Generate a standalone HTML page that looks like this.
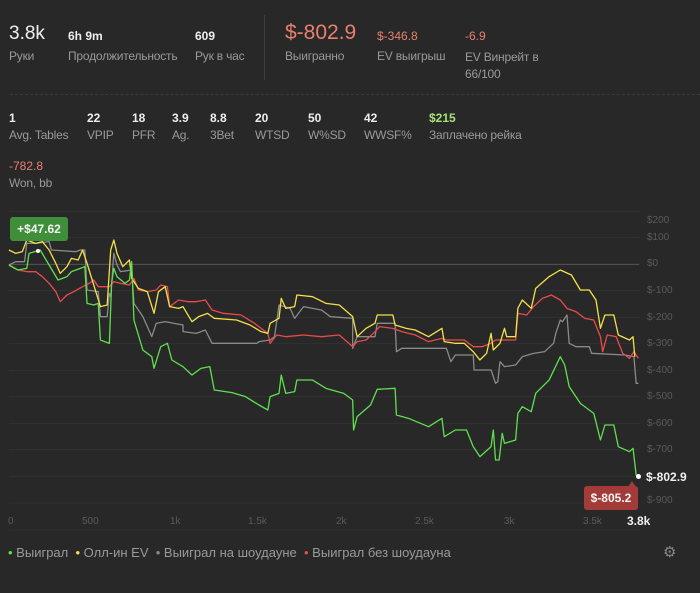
<!DOCTYPE html>
<html><head><meta charset="utf-8"><style>
body{margin:0;width:700px;height:593px;background:#282828;font-family:"Liberation Sans",sans-serif;overflow:hidden;position:relative;color:#e8e8e8}
.a{position:absolute;white-space:nowrap}
.v{font-size:12px;font-weight:bold;color:#eee}
.l{font-size:12px;color:#9a9a9a;letter-spacing:-0.2px}
.r{color:#e8806e}
.ax{position:absolute;font-size:10px;color:#5a5a5a;white-space:nowrap}
</style></head><body>
<div class="a" style="left:9px;top:23px;font-size:19px;color:#f0f0f0">3.8k</div>
<div class="a l" style="left:9px;top:49px">Руки</div>
<div class="a v" style="left:68px;top:29px">6h 9m</div>
<div class="a l" style="left:68px;top:49px">Продолжительность</div>
<div class="a v" style="left:195px;top:29px">609</div>
<div class="a l" style="left:195px;top:49px">Рук в час</div>
<div class="a" style="left:264px;top:15px;width:1px;height:65px;background:#3c3c3c"></div>
<div class="a r" style="left:285px;top:21px;font-size:21px">$-802.9</div>
<div class="a l" style="left:285px;top:49px">Выигранно</div>
<div class="a r" style="left:377px;top:29px;font-size:12px">$-346.8</div>
<div class="a l" style="left:377px;top:49px">EV выигрыш</div>
<div class="a r" style="left:465px;top:29px;font-size:12px">-6.9</div>
<div class="a l" style="left:465px;top:49px;line-height:17px">EV Винрейт в<br>66/100</div>
<div class="a" style="left:10px;top:94px;width:690px;border-top:1px dashed #3a3a3a"></div>
<div class="a v" style="left:9px;top:111px">1</div><div class="a l" style="left:9px;top:128px">Avg. Tables</div>
<div class="a v" style="left:87px;top:111px">22</div><div class="a l" style="left:87px;top:128px">VPIP</div>
<div class="a v" style="left:132px;top:111px">18</div><div class="a l" style="left:132px;top:128px">PFR</div>
<div class="a v" style="left:172px;top:111px">3.9</div><div class="a l" style="left:172px;top:128px">Ag.</div>
<div class="a v" style="left:210px;top:111px">8.8</div><div class="a l" style="left:210px;top:128px">3Bet</div>
<div class="a v" style="left:255px;top:111px">20</div><div class="a l" style="left:255px;top:128px">WTSD</div>
<div class="a v" style="left:308px;top:111px">50</div><div class="a l" style="left:308px;top:128px">W%SD</div>
<div class="a v" style="left:364px;top:111px">42</div><div class="a l" style="left:364px;top:128px">WWSF%</div>
<div class="a v" style="left:429px;top:111px;color:#a6e07a">$215</div><div class="a l" style="left:429px;top:128px">Заплачено рейка</div>
<div class="a r" style="left:9px;top:159px;font-size:12px">-782.8</div>
<div class="a l" style="left:9px;top:176px">Won, bb</div>

<svg class="a" style="left:0;top:200px" width="700" height="393" viewBox="0 0 1568 1179" preserveAspectRatio="none">
<g stroke="#313131" stroke-width="1" fill="none">
<line x1="20" x2="1432" y1="34" y2="34" vector-effect="non-scaling-stroke"/>
<line x1="20" x2="1432" y1="113" y2="113" vector-effect="non-scaling-stroke"/>
<line x1="20" x2="1432" y1="272" y2="272" vector-effect="non-scaling-stroke"/>
<line x1="20" x2="1432" y1="352" y2="352" vector-effect="non-scaling-stroke"/>
<line x1="20" x2="1432" y1="431" y2="431" vector-effect="non-scaling-stroke"/>
<line x1="20" x2="1432" y1="511" y2="511" vector-effect="non-scaling-stroke"/>
<line x1="20" x2="1432" y1="590" y2="590" vector-effect="non-scaling-stroke"/>
<line x1="20" x2="1432" y1="670" y2="670" vector-effect="non-scaling-stroke"/>
<line x1="20" x2="1432" y1="749" y2="749" vector-effect="non-scaling-stroke"/>
<line x1="20" x2="1432" y1="829" y2="829" vector-effect="non-scaling-stroke"/>
<line x1="20" x2="1432" y1="909" y2="909" vector-effect="non-scaling-stroke"/>
<line x1="20" x2="1432" y1="990" y2="990" vector-effect="non-scaling-stroke"/>
<line x1="20" x2="1432" y1="193" y2="193" stroke="#555" vector-effect="non-scaling-stroke"/>
</g>
<g fill="none" stroke-width="1.3" stroke-linejoin="round">
<polyline vector-effect="non-scaling-stroke" stroke="#8a8a8a" points="20,195 35,185 55,185 60,130 80,130 110,125 115,150 170,155 180,150 190,150 195,270 220,275 225,350 240,350 245,280 248,290 255,160 262,195 270,215 295,210 300,310 320,350 340,410 350,370 370,365 390,370 410,375 410,395 440,400 460,390 475,430 575,430 580,425 605,420 615,410 625,315 650,325 660,355 680,320 700,325 720,330 740,350 790,355 790,445 800,410 840,410 845,370 885,370 888,455 900,445 1000,445 1010,485 1020,465 1060,465 1062,510 1100,510 1110,550 1115,545 1120,485 1130,500 1155,495 1170,470 1195,460 1220,455 1240,430 1245,400 1255,360 1260,365 1270,345 1275,430 1290,440 1320,440 1325,460 1400,465 1420,470 1425,550 1430,550"/>
<polyline vector-effect="non-scaling-stroke" stroke="#e84b4b" points="20,195 40,210 60,215 80,215 95,230 110,250 125,275 135,305 150,285 165,275 185,260 200,250 210,240 220,260 245,260 255,245 270,250 290,255 300,235 310,270 330,275 350,270 360,255 375,260 380,320 400,300 420,305 440,305 460,300 475,330 500,340 540,345 570,370 600,400 605,430 620,405 640,410 680,405 720,410 760,405 790,440 800,425 820,420 840,395 850,380 880,385 900,395 930,405 960,425 990,415 1000,420 1040,420 1060,440 1080,440 1100,430 1110,420 1155,420 1160,340 1180,345 1195,320 1215,295 1235,285 1255,300 1270,325 1290,335 1310,355 1330,360 1345,410 1350,455 1360,405 1380,410 1395,460 1410,475 1420,455 1430,475"/>
<polyline vector-effect="non-scaling-stroke" stroke="#f2e14a" points="20,150 35,160 50,155 60,120 80,130 95,125 110,150 125,190 135,220 150,200 160,175 175,180 185,150 195,190 210,255 225,320 240,315 248,150 255,120 262,160 275,200 290,180 295,235 310,265 330,275 345,340 355,275 370,260 380,320 400,325 410,320 430,365 445,350 465,340 480,355 530,360 560,375 585,395 600,400 605,370 625,355 630,295 640,325 660,320 665,285 700,290 730,310 760,315 790,350 800,410 820,385 840,370 845,345 880,345 885,375 910,385 930,390 960,410 990,385 995,425 1020,430 1040,430 1060,455 1075,480 1090,460 1100,400 1105,450 1120,430 1130,385 1135,410 1155,410 1160,325 1170,300 1190,325 1200,265 1230,230 1255,210 1280,225 1300,270 1320,270 1335,300 1345,385 1355,345 1375,345 1385,405 1410,420 1418,410 1422,470"/>
<polyline vector-effect="non-scaling-stroke" stroke="#5ee04e" points="20,195 40,210 60,205 65,160 90,150 110,195 130,240 150,230 160,215 180,205 190,200 195,310 210,315 220,310 225,420 245,430 250,250 255,205 262,230 280,250 290,240 295,185 300,360 320,450 340,470 345,505 360,440 375,430 385,480 410,500 430,525 450,505 470,500 480,570 520,578 550,590 580,615 600,630 605,590 625,580 630,525 640,580 660,575 665,540 700,540 730,565 770,580 790,600 792,690 800,650 830,615 845,568 885,565 888,645 915,655 960,680 990,655 995,710 1020,690 1045,690 1060,740 1075,770 1100,740 1105,690 1110,780 1118,780 1125,700 1130,730 1155,720 1160,640 1170,620 1190,635 1200,580 1230,540 1255,470 1265,495 1275,560 1300,610 1330,640 1345,720 1355,675 1375,675 1385,740 1410,755 1418,745 1425,825 1432,830"/>
</g>
</svg>
<div class="a" style="left:36px;top:249px;width:4px;height:4px;border-radius:50%;background:#fff"></div>
<div class="a" style="left:636px;top:474px;width:5px;height:5px;border-radius:50%;background:#fff"></div>
<div class="a" style="left:10px;top:217px;width:58px;height:24px;background:#3f8f3a;border-radius:3px;color:#f4f4f4;font-size:12px;font-weight:bold;line-height:24px;text-align:center">+$47.62</div>
<div class="a" style="left:584px;top:486px;width:54px;height:24px;background:#a33b38;border-radius:3px;color:#f4f4f4;font-size:12px;font-weight:bold;line-height:24px;text-align:center">$-805.2</div>
<div class="a" style="left:628px;top:481px;width:0;height:0;border-left:4px solid transparent;border-right:4px solid transparent;border-bottom:6px solid #a33b38"></div>
<div class="ax" style="left:647px;top:215px">$200</div>
<div class="ax" style="left:647px;top:232px">$100</div>
<div class="ax" style="left:647px;top:258px">$0</div>
<div class="ax" style="left:647px;top:285px">$-100</div>
<div class="ax" style="left:647px;top:312px">$-200</div>
<div class="ax" style="left:647px;top:338px">$-300</div>
<div class="ax" style="left:647px;top:365px">$-400</div>
<div class="ax" style="left:647px;top:391px">$-500</div>
<div class="ax" style="left:647px;top:418px">$-600</div>
<div class="ax" style="left:647px;top:444px">$-700</div>
<div class="ax" style="left:647px;top:495px">$-900</div>
<div class="a" style="left:646px;top:470px;font-size:12px;font-weight:bold;color:#f0f0f0">$-802.9</div>
<div class="ax" style="left:8px;top:516px">0</div>
<div class="ax" style="left:82px;top:516px">500</div>
<div class="ax" style="left:170px;top:516px">1k</div>
<div class="ax" style="left:248px;top:516px">1.5k</div>
<div class="ax" style="left:336px;top:516px">2k</div>
<div class="ax" style="left:415px;top:516px">2.5k</div>
<div class="ax" style="left:504px;top:516px">3k</div>
<div class="ax" style="left:583px;top:516px">3.5k</div>
<div class="a" style="left:627px;top:514px;font-size:12px;font-weight:bold;color:#f0f0f0">3.8k</div>
<div class="a" style="left:8px;top:545px;font-size:13px;color:#9a9a9a"><span style="color:#5ee04e">•</span> Выиграл &nbsp;<span style="color:#f2e14a">•</span> Олл-ин EV &nbsp;<span style="color:#8a8a8a">•</span> Выиграл на шоудауне &nbsp;<span style="color:#e84b4b">•</span> Выиграл без шоудауна</div>
<div class="a" style="left:663px;top:543px;font-size:15px;color:#888">⚙</div>
</body></html>
